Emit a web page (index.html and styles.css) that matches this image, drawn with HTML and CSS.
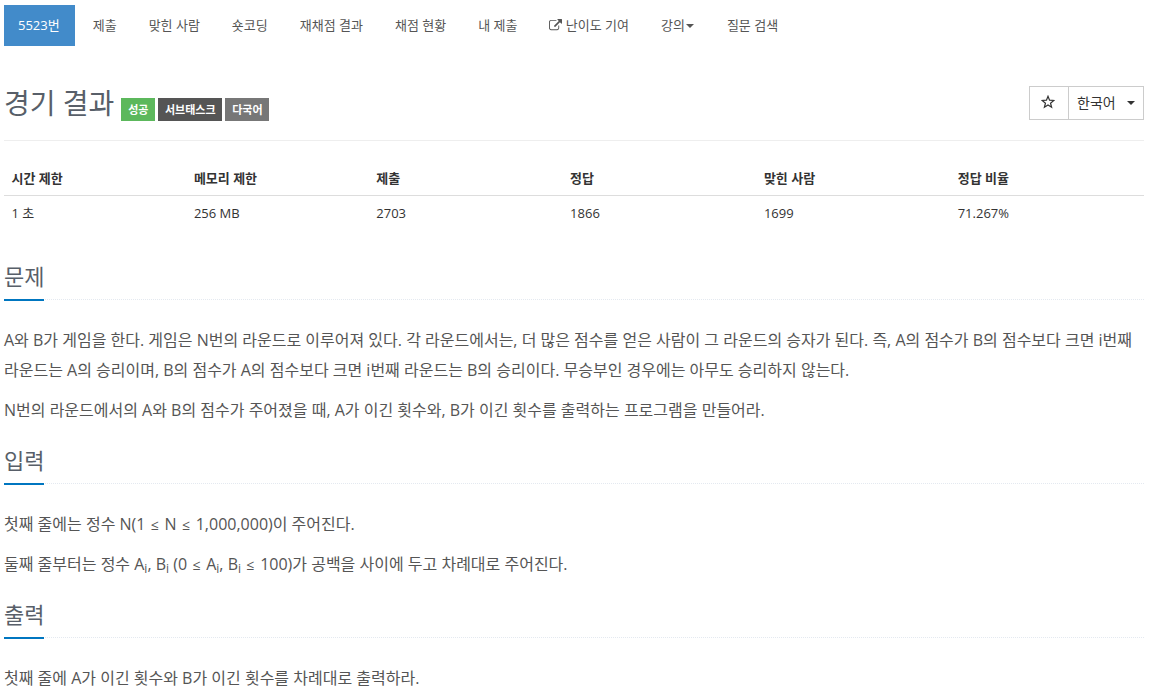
FILE: index.html
```
<!DOCTYPE html>
<html lang="ko">
<head>
    <meta charset="utf-8">
    <title>5523번: 경기 결과</title>
    <link rel="stylesheet" href="styles.css">
</head>
<body>
    <ul class="problem-menu">
        <li class="active"><a href="#">5523번</a></li>
        <li><a href="#">제출</a></li>
        <li><a href="#">맞힌 사람</a></li>
        <li><a href="#">숏코딩</a></li>
        <li><a href="#">재채점 결과</a></li>
        <li><a href="#">채점 현황</a></li>
        <li><a href="#">내 제출</a></li>
        <li>
            <a href="#"><svg class="icon-link" viewBox="0 0 1792 1792"><path fill="currentColor" d="M1408 928v320q0 119-84.500 203.500t-203.500 84.500h-832q-119 0-203.500-84.500t-84.500-203.500v-832q0-119 84.500-203.500t203.500-84.500h704q14 0 23 9t9 23v64q0 14-9 23t-23 9h-704q-66 0-113 47t-47 113v832q0 66 47 113t113 47h832q66 0 113-47t47-113v-320q0-14 9-23t23-9h64q14 0 23 9t9 23zm384-864v512q0 26-19 45t-45 19-45-19l-176-176-652 652q-10 10-23 10t-23-10l-114-114q-10-10-10-23t10-23l652-652-176-176q-19-19-19-45t19-45 45-19h512q26 0 45 19t19 45z"/></svg> 난이도 기여</a>
        </li>
        <li><a href="#">강의<b class="caret"></b></a></li>
        <li><a href="#">질문 검색</a></li>
    </ul>

    <div class="page-header">
        <h1>경기 결과</h1>
        <div class="labels">
            <span class="label label-success">성공</span>
            <span class="label label-subtask">서브태스크</span>
            <span class="label label-language">다국어</span>
        </div>
        <div class="btn-group">
            <button class="btn btn-star">
                <svg class="icon-star" viewBox="0 0 14 14"><path fill="none" stroke="currentColor" stroke-width="1.2" d="M7 1.300l1.550 3.900 4.300.3-3.300 2.700 1.050 4.100L7 10 3.400 12.300l1.050-4.100-3.300-2.700 4.300-.3z"/></svg>
            </button>
            <button class="btn btn-language">한국어<b class="caret"></b></button>
        </div>
    </div>

    <table class="problem-info">
        <thead>
            <tr>
                <th class="limit">시간 제한</th>
                <th class="limit">메모리 제한</th>
                <th>제출</th>
                <th>정답</th>
                <th>맞힌 사람</th>
                <th>정답 비율</th>
            </tr>
        </thead>
        <tbody>
            <tr>
                <td>1 초</td>
                <td>256 MB</td>
                <td>2703</td>
                <td>1866</td>
                <td>1699</td>
                <td>71.267%</td>
            </tr>
        </tbody>
    </table>

    <section>
        <div class="headline"><h2>문제</h2></div>
        <div class="problem-text">
            <p>A와 B가 게임을 한다. 게임은 N번의 라운드로 이루어져 있다. 각 라운드에서는, 더 많은 점수를 얻은 사람이 그 라운드의 승자가 된다. 즉, A의 점수가 B의 점수보다 크면 i번째 라운드는 A의 승리이며, B의 점수가 A의 점수보다 크면 i번째 라운드는 B의 승리이다. 무승부인 경우에는 아무도 승리하지 않는다.</p>
            <p>N번의 라운드에서의 A와 B의 점수가 주어졌을 때, A가 이긴 횟수와, B가 이긴 횟수를 출력하는 프로그램을 만들어라.</p>
        </div>
    </section>

    <section>
        <div class="headline"><h2>입력</h2></div>
        <div class="problem-text">
            <p>첫째 줄에는 정수 N(1 <span class="leq">≤</span> N <span class="leq">≤</span> 1,000,000)이 주어진다.</p>
            <p>둘째 줄부터는 정수 A<sub>i</sub>, B<sub>i</sub> (0 <span class="leq">≤</span> A<sub>i</sub>, B<sub>i</sub> <span class="leq">≤</span> 100)가 공백을 사이에 두고 차례대로 주어진다.</p>
        </div>
    </section>

    <section>
        <div class="headline"><h2>출력</h2></div>
        <div class="problem-text">
            <p>첫째 줄에 A가 이긴 횟수와 B가 이긴 횟수를 차례대로 출력하라.</p>
        </div>
    </section>
</body>
</html>
```
FILE: styles.css
```
* {
    box-sizing: border-box;
}
body {
    margin: 0;
    padding: 5px 5px 0 4px;
    height: 691px;
    overflow: hidden;
    background: #fff;
    color: #333;
    font-family: "Open Sans", "Noto Sans CJK KR", sans-serif;
    font-size: 13px;
    line-height: 20px;
}
.problem-menu {
    display: flex;
    gap: 2px;
    height: 41px;
    margin: 0;
    padding: 0;
    list-style: none;
}
.problem-menu a {
    display: block;
    height: 41px;
    padding: 10px 15px;
    color: #555;
    text-decoration: none;
    white-space: nowrap;
}
.problem-menu .active {
    margin-right: 1px;
}
.problem-menu .active a {
    padding: 10px 15px 10px 14px;
    background: #428bca;
    color: #fff;
}
.icon-link {
    width: 13px;
    height: 13px;
    vertical-align: -2px;
}
.caret {
    display: inline-block;
    border-top: 4px solid;
    border-left: 4px solid transparent;
    border-right: 4px solid transparent;
    vertical-align: middle;
}
.problem-menu .caret {
    margin: 0 1px;
    vertical-align: 2px;
}
.page-header {
    display: flex;
    align-items: flex-start;
    height: 95px;
    border-bottom: 1px solid #eee;
}
h1 {
    margin: 38px 7px 0 0;
    color: #585f69;
    font-size: 28px;
    font-weight: 400;
    line-height: 39px;
}
.labels {
    display: flex;
    gap: 3px;
    margin-top: 52px;
}
.label {
    height: 23px;
    padding: 0 6.8px;
    color: #fff;
    font-size: 11px;
    font-weight: 700;
    line-height: 23px;
}
.label-success {
    background: #5cb85c;
}
.label-subtask {
    background: #555;
}
.label-language {
    background: #777;
}
.btn-group {
    display: flex;
    margin: 40px 0 0 auto;
}
.btn {
    height: 34px;
    border: 1px solid #ccc;
    background: #fff;
    color: #333;
    font: inherit;
    font-size: 14px;
}
.btn-star {
    width: 40px;
    padding: 0 13px 2px 11px;
}
.btn-language {
    display: flex;
    align-items: center;
    justify-content: space-between;
    width: 76px;
    margin-left: -1px;
    padding: 0 8px;
}
.icon-star {
    display: block;
    width: 14px;
    height: 14px;
}
.problem-info {
    width: 100%;
    margin: 18px 0 29px;
    border-collapse: collapse;
    table-layout: fixed;
}
.problem-info th,
.problem-info td {
    width: 17%;
    height: 36px;
    padding: 8px 7.5px;
    text-align: left;
}
.problem-info .limit {
    width: 16%;
}
.problem-info th {
    padding-top: 9px;
    padding-bottom: 7px;
    border-bottom: 1px solid #ddd;
}
.problem-info td {
    padding-top: 7px;
    padding-bottom: 9px;
}
.headline {
    height: 39px;
    margin-bottom: 25px;
    border-bottom: 1px dotted #e4e9f0;
}
.headline h2 {
    display: inline-block;
    height: 40px;
    margin: 0;
    border-bottom: 2px solid #0076c0;
    color: #585f69;
    font-size: 22px;
    font-weight: 400;
    line-height: 31px;
    vertical-align: top;
}
.problem-text {
    margin-bottom: 20px;
    color: #555;
    font-size: 16px;
    line-height: 30px;
}
.problem-text p {
    margin: 0 0 10px;
}
.problem-text sub {
    font-size: 75%;
    line-height: 0;
    position: relative;
    bottom: -0.25em;
    vertical-align: baseline;
}
.leq {
    margin: 0 1.4px;
    font-size: 14px;
    line-height: 0;
}
```
